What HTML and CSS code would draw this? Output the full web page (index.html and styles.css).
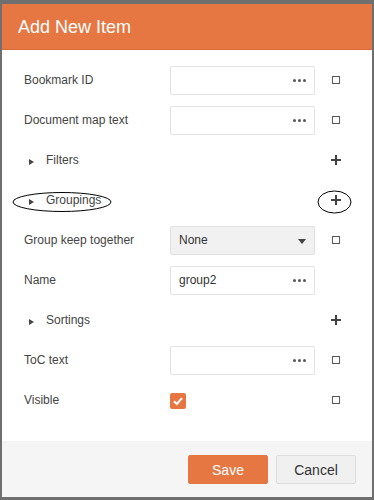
FILE: index.html
```html
<!DOCTYPE html>
<html lang="en">
<head>
    <meta charset="UTF-8">
    <meta name="viewport" content="width=device-width, initial-scale=1.0">
    <title>Add New Item</title>
    <link rel="stylesheet" href="styles.css">
</head>
<body>
    <div class="dialog">
        <div class="dialog-header">Add New Item</div>

        <div class="dialog-body">
            <div class="row">
                <span class="label">Bookmark ID</span>
                <div class="editor"><span class="value"></span><span class="dots"><i></i><i></i><i></i></span></div>
                <span class="reset"></span>
            </div>
            <div class="row">
                <span class="label">Document map text</span>
                <div class="editor"><span class="value"></span><span class="dots"><i></i><i></i><i></i></span></div>
                <span class="reset"></span>
            </div>
            <div class="row group-row">
                <span class="label"><span class="arrow"></span>Filters</span>
                <span></span>
                <span class="plus"></span>
            </div>
            <div class="row group-row">
                <span class="label"><span class="arrow"></span>Groupings</span>
                <span></span>
                <span class="plus"></span>
                <svg class="mark mark-label" width="100" height="22" viewBox="0 0 100 22"><ellipse cx="50" cy="11" rx="49" ry="9.5" fill="none" stroke="#000" stroke-width="1"/></svg>
                <svg class="mark mark-plus" width="35" height="24" viewBox="0 0 35 24"><ellipse cx="17.5" cy="12" rx="16.5" ry="11" fill="none" stroke="#000" stroke-width="1"/></svg>
            </div>
            <div class="row">
                <span class="label">Group keep together</span>
                <div class="editor select"><span class="value">None</span><span class="caret"></span></div>
                <span class="reset"></span>
            </div>
            <div class="row">
                <span class="label">Name</span>
                <div class="editor"><span class="value">group2</span><span class="dots"><i></i><i></i><i></i></span></div>
                <span></span>
            </div>
            <div class="row group-row">
                <span class="label"><span class="arrow"></span>Sortings</span>
                <span></span>
                <span class="plus"></span>
            </div>
            <div class="row">
                <span class="label">ToC text</span>
                <div class="editor"><span class="value"></span><span class="dots"><i></i><i></i><i></i></span></div>
                <span class="reset"></span>
            </div>
            <div class="row">
                <span class="label">Visible</span>
                <div>
                    <span class="checkbox">
                        <svg width="16" height="16" viewBox="0 0 16 16"><path d="M4 8.2 L6.8 11 L12 5.2" fill="none" stroke="#fff" stroke-width="2"/></svg>
                    </span>
                </div>
                <span class="reset"></span>
            </div>
        </div>

        <div class="dialog-footer">
            <button class="button button-primary">Save</button>
            <button class="button">Cancel</button>
        </div>
    </div>
</body>
</html>
```

FILE: styles.css
```css
body {
    margin: 0;
    padding: 4px 2px 0 2px;
    background-color: #6f6f6f;
    font-family: 'Liberation Sans', Arial, sans-serif;
    height: 500px;
    box-sizing: border-box;
    overflow: hidden;
}
.dialog {
    width: 370px;
    height: 493px;
    background-color: #ffffff;
    display: flex;
    flex-direction: column;
}
.dialog-header {
    height: 46px;
    box-sizing: border-box;
    background-color: #e67743;
    border-bottom: 1px solid #d96a38;
    color: #ffffff;
    font-size: 18px;
    line-height: 46px;
    padding-left: 16px;
}
.dialog-body {
    flex: 1;
    padding: 10px 0 0 22px;
}
.row {
    position: relative;
    display: grid;
    grid-template-columns: 146px 145px 40px;
    align-items: center;
    height: 40px;
}
.label {
    font-size: 12px;
    color: #444444;
    display: flex;
    align-items: center;
}
.group-row .label {
    padding-left: 5px;
}
.arrow {
    width: 0;
    height: 0;
    border-top: 3px solid transparent;
    border-bottom: 3px solid transparent;
    border-left: 5px solid #444444;
    margin: 4px 12px 0 0;
}
.editor {
    height: 29px;
    box-sizing: border-box;
    border: 1px solid #e3e3e3;
    border-radius: 2px;
    background-color: #ffffff;
    display: flex;
    align-items: center;
    justify-content: space-between;
    padding: 0 8px 0 8px;
    font-size: 12px;
    color: #333333;
}
.select {
    background-color: #f1f1f1;
    border-color: #e0e0e0;
}
.dots {
    display: flex;
    gap: 2px;
}
.dots i {
    width: 3px;
    height: 3px;
    border-radius: 50%;
    background-color: #555555;
}
.caret {
    width: 0;
    height: 0;
    border-left: 4px solid transparent;
    border-right: 4px solid transparent;
    border-top: 5px solid #444444;
    margin-top: 2px;
}
.reset {
    justify-self: center;
    width: 6px;
    height: 6px;
    border: 1px solid #555555;
    margin-left: 1px;
}
.plus {
    justify-self: center;
    position: relative;
    width: 10px;
    height: 10px;
    margin-left: 1px;
}
.plus::before,
.plus::after {
    content: "";
    position: absolute;
    background-color: #444444;
}
.plus::before {
    left: 0;
    top: 4px;
    width: 10px;
    height: 2px;
}
.plus::after {
    left: 4px;
    top: 0;
    width: 2px;
    height: 10px;
}
.checkbox {
    display: block;
    width: 16px;
    height: 16px;
    border-radius: 2px;
    background-color: #e67743;
    margin-top: 1px;
}
.checkbox svg {
    display: block;
}
.mark {
    position: absolute;
}
.mark-label {
    left: -12px;
    top: 11px;
}
.mark-plus {
    left: 293px;
    top: 10px;
}
.dialog-footer {
    height: 56px;
    box-sizing: border-box;
    background-color: #f5f5f5;
    display: flex;
    justify-content: flex-end;
    gap: 8px;
    padding: 14px 16px 0 0;
}
.button {
    width: 80px;
    height: 29px;
    border: 1px solid #dddddd;
    border-radius: 2px;
    background-color: #f0f0f0;
    color: #333333;
    font-family: 'Liberation Sans', Arial, sans-serif;
    font-size: 14px;
    padding: 0;
    cursor: pointer;
}
.button-primary {
    background-color: #e67743;
    border-color: #e67743;
    color: #ffffff;
}
```
